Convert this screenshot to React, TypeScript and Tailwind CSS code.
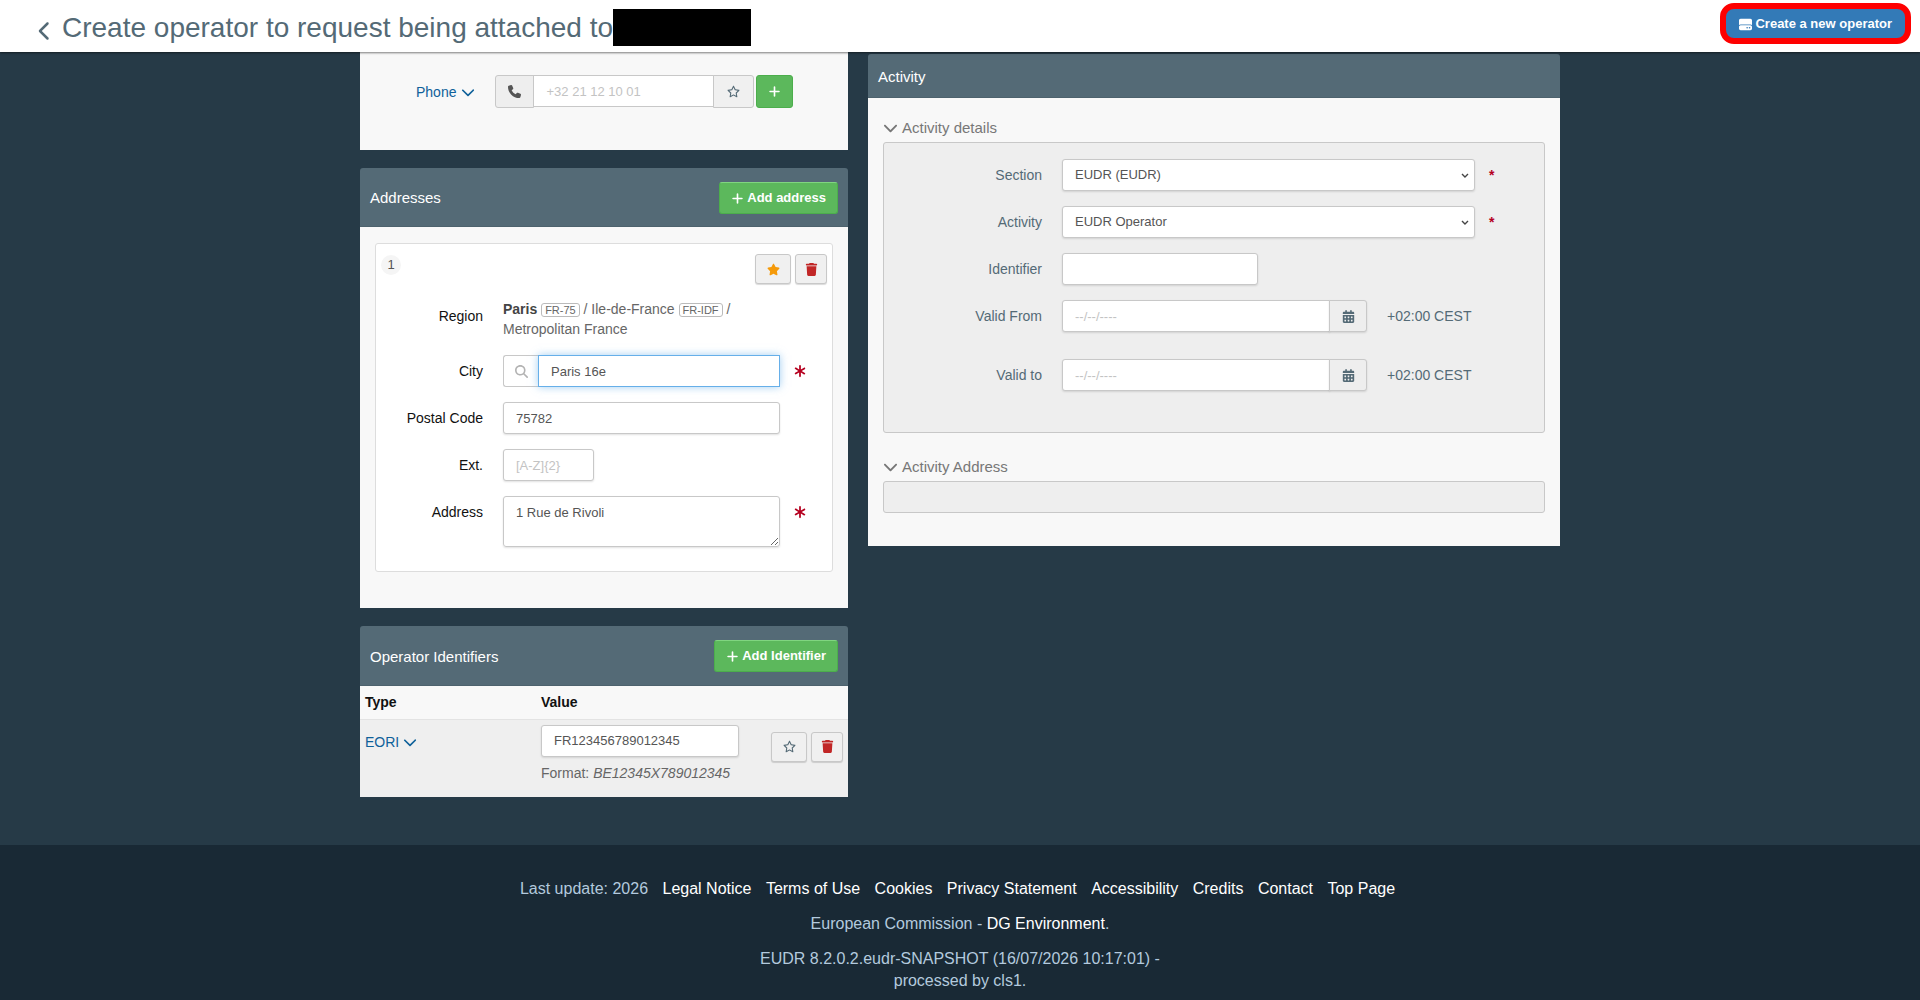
import type { ReactNode } from "react";
import {
    FaAsterisk,
    FaCalendarDays,
    FaChevronDown,
    FaChevronLeft,
    FaHardDrive,
    FaMagnifyingGlass,
    FaPhone,
    FaPlus,
    FaRegStar,
    FaStar,
    FaTrash,
} from "react-icons/fa6";

const footerLinks = [
    "Legal Notice",
    "Terms of Use",
    "Cookies",
    "Privacy Statement",
    "Accessibility",
    "Credits",
    "Contact",
    "Top Page",
];

const field =
    "h-8 border border-[#c8c8c8] bg-white px-3 text-[13px] text-[#555] shadow-[0_1px_2px_rgba(0,0,0,0.12)] outline-none placeholder:text-[#c3c3c3]";
const iconButton =
    "flex h-[30px] items-center justify-center rounded-[3px] border border-[#c8c8c8] bg-[#f0f0f0] text-[13px] shadow-[0_1px_1px_rgba(0,0,0,0.15)]";
const greenButton =
    "flex h-8 items-center gap-[3px] rounded-[3px] border border-[#4cae4c] border-t-[#80d580] bg-[#5cb85c] px-[11px] text-[13px] font-bold text-white";
const regionCode =
    "inline-block rounded-[3px] border border-[#bbb] px-[3px] text-[11px] leading-[12px]";

function PanelHeader({ title, children }: { title: string; children?: ReactNode }) {
    return (
        <header className="flex items-center justify-between rounded-t-[3px] border-b border-[#4d626d] bg-[#546a76] px-[10px] text-[15px] text-white">
            <h2 className="pt-3 pb-[10px]">{title}</h2>
            {children}
        </header>
    );
}

function AddressRow({ label, id, required, children }: { label: string; id: string; required?: boolean; children: ReactNode }) {
    return (
        <div className="flex items-start">
            <label htmlFor={id} className="w-[107px] shrink-0 pt-[6px] text-right leading-5 text-[#111]">{label}</label>
            <div className="ml-5 w-[277px]">{children}</div>
            {required && <FaAsterisk className="mt-[9px] ml-[13px] size-[14px] text-[#b5001f]" />}
        </div>
    );
}

function ActivityRow({ label, id, children }: { label: string; id: string; children: ReactNode }) {
    return (
        <div className="flex items-center">
            <label htmlFor={id} className="w-[158px] shrink-0 text-right text-[#546a76]">{label}</label>
            <div className="ml-5 flex grow items-center">{children}</div>
        </div>
    );
}

function SelectField({ id, value }: { id: string; value: string }) {
    return (
        <>
            <div className="relative w-[413px]">
                <select id={id} defaultValue={value} className="block h-8 w-full appearance-none rounded-[3px] border border-[#c8c8c8] bg-white px-3 text-[13px] text-[#555] shadow-[0_1px_2px_rgba(0,0,0,0.12)]">
                    <option>{value}</option>
                </select>
                <svg viewBox="0 0 8 6" className="pointer-events-none absolute top-[14px] right-[6px] h-[6px] w-2 fill-none stroke-[#444]" strokeWidth="1.4">
                    <path d="M1 1l3 3 3-3" />
                </svg>
            </div>
            <span className="ml-[14px] font-bold text-[#b5001f]">*</span>
        </>
    );
}

function DateField({ id }: { id: string }) {
    return (
        <>
            <input id={id} placeholder="--/--/----" className={`${field} w-[268px] rounded-l-[3px]`} />
            <button aria-label="Open calendar" className="-ml-px flex h-8 w-[38px] items-center justify-center rounded-r-[3px] border border-[#c8c8c8] bg-[#eee] text-[13px] text-[#546a76] shadow-[0_1px_2px_rgba(0,0,0,0.12)]">
                <FaCalendarDays />
            </button>
            <span className="ml-5 text-[#546a76]">+02:00 CEST</span>
        </>
    );
}

function AddressesPanel() {
    return (
        <section>
            <PanelHeader title="Addresses">
                <button className={`${greenButton} mt-[14px] mb-3`}>
                    <FaPlus className="size-[13px]" />
                    Add address
                </button>
            </PanelHeader>
            <div className="bg-[#f8f8f8] px-[15px] pt-4 pb-9">
                <div className="rounded-[3px] border border-[#ddd] bg-white pb-6">
                    <div className="flex items-start gap-1 pt-[10px] pr-[5px] pl-[5px]">
                        <span className="mt-px mr-auto flex size-5 items-center justify-center rounded-full bg-[#f5f5f5] text-[13px] text-[#555]">1</span>
                        <button aria-label="Main address" className={`${iconButton} w-9 text-[#f59a0a]`}><FaStar /></button>
                        <button aria-label="Delete address" className={`${iconButton} w-8 text-[#c12626]`}><FaTrash /></button>
                    </div>
                    <div className="mt-[15px] flex items-start">
                        <span className="w-[107px] shrink-0 pt-[7px] text-right leading-5 text-[#111]">Region</span>
                        <p className="ml-5 leading-5 text-[#666]">
                            <b className="text-[#444]">Paris</b>{" "}
                            <span className={regionCode}>FR-75</span> / Ile-de-France{" "}
                            <span className={regionCode}>FR-IDF</span> /
                            <br />
                            Metropolitan France
                        </p>
                    </div>
                    <div className="mt-4 flex flex-col gap-[15px]">
                        <AddressRow label="City" id="city" required>
                            <div className="flex">
                                <span className="flex h-8 w-9 items-center justify-center rounded-l-[3px] border border-r-0 border-[#c8c8c8] text-[13px] text-[#b3b3b3]">
                                    <FaMagnifyingGlass />
                                </span>
                                <input id="city" defaultValue="Paris 16e" className="-ml-px h-8 min-w-0 grow border border-[#66afe9] px-3 text-[13px] text-[#555] shadow-[0_0_8px_rgba(102,175,233,0.6)] outline-none" />
                            </div>
                        </AddressRow>
                        <AddressRow label="Postal Code" id="postal">
                            <input id="postal" defaultValue="75782" className={`${field} w-full rounded-[3px]`} />
                        </AddressRow>
                        <AddressRow label="Ext." id="ext">
                            <input id="ext" placeholder="[A-Z]{2}" className={`${field} w-[91px] rounded-[3px]`} />
                        </AddressRow>
                        <AddressRow label="Address" id="street" required>
                            <textarea id="street" defaultValue="1 Rue de Rivoli" className="block h-[51px] w-full rounded-[3px] border border-[#c8c8c8] px-3 py-[6px] text-[13px] leading-5 text-[#555] shadow-[0_1px_2px_rgba(0,0,0,0.12)]" />
                        </AddressRow>
                    </div>
                </div>
            </div>
        </section>
    );
}

function IdentifiersPanel() {
    return (
        <section>
            <PanelHeader title="Operator Identifiers">
                <button className={`${greenButton} mt-[14px] mb-[13px]`}>
                    <FaPlus className="size-[13px]" />
                    Add Identifier
                </button>
            </PanelHeader>
            <table className="w-full table-fixed bg-[#efefef]">
                <thead className="bg-[#f8f8f8] text-left text-[#111]">
                    <tr className="border-b border-[#e3e3e3]">
                        <th className="h-[33px] w-[176px] px-[5px]">Type</th>
                        <th className="px-[5px]">Value</th>
                        <th className="w-[82px]" aria-label="Actions"></th>
                    </tr>
                </thead>
                <tbody>
                    <tr className="align-top">
                        <td className="px-[5px] pt-3 pb-[14px]">
                            <button className="flex items-center gap-1 leading-5 text-[#0f619a]">
                                EORI <FaChevronDown className="size-[14px]" />
                            </button>
                        </td>
                        <td className="px-[5px] pt-[5px] pb-[14px] text-[#666]">
                            <input aria-label="Identifier value" defaultValue="FR123456789012345" className={`${field} block w-[198px] rounded-[3px]`} />
                            <p className="mt-[6px] leading-5">Format: <i>BE12345X789012345</i></p>
                        </td>
                        <td className="pt-3 pr-[5px]">
                            <div className="flex justify-end gap-1">
                                <button aria-label="Main identifier" className={`${iconButton} w-9 text-[#546a76]`}><FaRegStar /></button>
                                <button aria-label="Delete identifier" className={`${iconButton} w-8 text-[#c12626]`}><FaTrash /></button>
                            </div>
                        </td>
                    </tr>
                </tbody>
            </table>
        </section>
    );
}

function ActivityPanel() {
    return (
        <section>
            <PanelHeader title="Activity" />
            <div className="bg-[#f8f8f8] px-[15px] pt-[19px] pb-[33px]">
                <h3 className="flex h-5 items-center gap-1 text-[15px] text-[#777]">
                    <FaChevronDown className="size-[15px]" />
                    Activity details
                </h3>
                <div className="mt-[5px] flex flex-col gap-[15px] rounded-[3px] border border-[#c8c8c8] bg-[#eee] pt-4 pb-[41px]">
                    <ActivityRow label="Section" id="section">
                        <SelectField id="section" value="EUDR (EUDR)" />
                    </ActivityRow>
                    <ActivityRow label="Activity" id="activity">
                        <SelectField id="activity" value="EUDR Operator" />
                    </ActivityRow>
                    <ActivityRow label="Identifier" id="identifier">
                        <input id="identifier" className={`${field} w-[196px] rounded-[3px]`} />
                    </ActivityRow>
                    <ActivityRow label="Valid From" id="from">
                        <DateField id="from" />
                    </ActivityRow>
                    <div className="mt-3">
                        <ActivityRow label="Valid to" id="to">
                            <DateField id="to" />
                        </ActivityRow>
                    </div>
                </div>
                <h3 className="mt-[23px] flex h-5 items-center gap-1 text-[15px] text-[#777]">
                    <FaChevronDown className="size-[15px]" />
                    Activity Address
                </h3>
                <div className="mt-[5px] h-8 rounded-[3px] border border-[#c8c8c8] bg-[#eee]" />
            </div>
        </section>
    );
}

export default function App() {
    return (
        <div className="flex min-h-screen flex-col bg-[#263a47] font-['Liberation_Sans',Arial,sans-serif] text-sm">
            <header className="relative flex h-[52px] items-start justify-between bg-white pr-[9px] pl-[37px] shadow-[0_1px_2px_rgba(0,0,0,0.5)]">
                <div className="flex items-center pt-[9px]">
                    <a href="#" aria-label="Back" className="mr-[9px] text-[#546a76]">
                        <FaChevronLeft className="mt-[6px] h-5 w-4" />
                    </a>
                    <h1 className="text-[28px] leading-9 text-[#546a76]">Create operator to request being attached to</h1>
                    <span className="h-[37px] w-[138px] bg-black" />
                </div>
                <button className="mt-[3px] flex h-[41px] items-center gap-[3px] rounded-[14px] border-[6px] border-[#fe0000] bg-[#337ab7] px-[13px] pt-[2px] text-[13px] font-bold text-white">
                    <FaHardDrive className="size-[13px]" />
                    Create a new operator
                </button>
            </header>

            <main className="mx-auto flex w-full max-w-[1200px] items-start gap-5 pb-12">
                <div className="flex w-[488px] shrink-0 flex-col gap-[18px]">
                    <section className="flex h-[98px] items-start bg-[#f8f8f8] pt-[23px] pl-14">
                        <button className="flex h-[34px] items-center gap-[5px] text-[#0f619a]">
                            Phone <FaChevronDown className="size-[14px]" />
                        </button>
                        <span className="ml-5 flex h-[33px] w-[39px] items-center justify-center rounded-l-[3px] border border-[#c8c8c8] bg-[#eee] text-[13px] text-[#555]">
                            <FaPhone />
                        </span>
                        <input aria-label="Phone number" placeholder="+32 21 12 10 01" className="-ml-px h-8 w-[181px] border border-[#c8c8c8] bg-white px-3 text-[13px] outline-none placeholder:text-[#c3c3c3]" />
                        <button aria-label="Main phone" className="-ml-px flex h-[33px] w-[41px] items-center justify-center rounded-r-[3px] border border-[#c8c8c8] bg-[#f0f0f0] text-[13px] text-[#546a76]">
                            <FaRegStar />
                        </button>
                        <button aria-label="Add phone" className="ml-[2px] flex h-[33px] w-[37px] items-center justify-center rounded-[3px] border border-[#4cae4c] bg-[#5cb85c] text-[13px] text-white">
                            <FaPlus />
                        </button>
                    </section>
                    <AddressesPanel />
                    <IdentifiersPanel />
                </div>
                <div className="min-w-0 grow pt-[2px]">
                    <ActivityPanel />
                </div>
            </main>

            <footer className="grow bg-[#192935] pt-8 text-center text-base leading-[22px] text-[#b3cade]">
                <nav className="py-[1px]">
                    <span className="mr-[5px]">Last update: 2026</span>{" "}
                    {footerLinks.map((link) => (
                        <span key={link}>
                            <a href="#" className="mx-[5px] text-white">{link}</a>{" "}
                        </span>
                    ))}
                </nav>
                <p className="mt-3">European Commission - <a href="#" className="text-white">DG Environment</a>.</p>
                <p className="mx-auto mt-[13px] max-w-[420px]">EUDR 8.2.0.2.eudr-SNAPSHOT (16/07/2026 10:17:01) - processed by cls1.</p>
            </footer>
        </div>
    );
}
